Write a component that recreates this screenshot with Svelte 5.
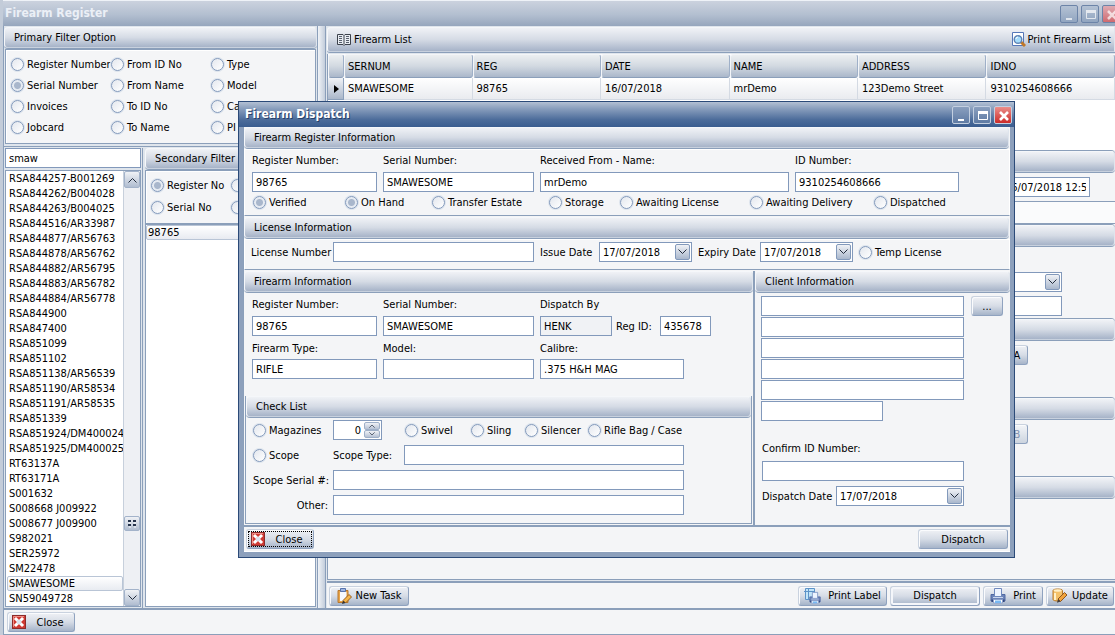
<script>
  const primary = ['Register Number', 'From ID No', 'Type', 'Serial Number', 'From Name', 'Model', 'Invoices', 'To ID No', 'Calibre', 'Jobcard', 'To Name', 'PI'];
  const serials = [
    'RSA844257-B001269', 'RSA844262/B004028', 'RSA844263/B004025', 'RSA844516/AR33987', 'RSA844877/AR56763',
    'RSA844878/AR56762', 'RSA844882/AR56795', 'RSA844883/AR56782', 'RSA844884/AR56778', 'RSA844900', 'RSA847400',
    'RSA851099', 'RSA851102', 'RSA851138/AR56539', 'RSA851190/AR58534', 'RSA851191/AR58535', 'RSA851339',
    'RSA851924/DM400024', 'RSA851925/DM400025', 'RT63137A', 'RT63171A', 'S001632', 'S008668 J009922',
    'S008677 J009900', 'S982021', 'SER25972', 'SM22478', 'SMAWESOME', 'SN59049728'
  ];
  const columns = ['SERNUM', 'REG', 'DATE', 'NAME', 'ADDRESS', 'IDNO'];
  const record = ['SMAWESOME', '98765', '16/07/2018', 'mrDemo', '123Demo Street', '9310254608666'];
  const statuses = ['Verified', 'On Hand', 'Transfer Estate', 'Storage', 'Awaiting License', 'Awaiting Delivery', 'Dispatched'];
</script>

{#snippet radio(label, group, checked = false)}
  <label class="radio"><input type="radio" name={group} {checked} /><span>{label}</span></label>
{/snippet}

{#snippet chevron()}
  <svg width="9" height="6" viewBox="0 0 9 6" fill="none" stroke="#222c3c" aria-hidden="true"><path d="M.5 .5l4 4 4-4" /></svg>
{/snippet}

{#snippet drop(value, id, label)}
  <span class="drop">
    <select {id} aria-label={label}><option>{value}</option></select>
    <i>{@render chevron()}</i>
  </span>
{/snippet}

{#snippet field(label, id, value)}
  <div class="field"><label for={id}>{label}</label><input type="text" {id} {value} /></div>
{/snippet}

{#snippet closeIcon()}
  <svg width="14" height="14" viewBox="0 0 14 14" aria-hidden="true">
    <rect x=".5" y=".5" width="13" height="13" fill="#cf3a34" stroke="#8c2b2b" />
    <path d="M1.500 12V1.500H12" fill="none" stroke="#f08d85" />
    <path d="M4 4l6 6M10 4l-6 6" stroke="#fff" stroke-width="3" stroke-linecap="square" />
    <rect x="5" y="5" width="4" height="4" fill="#dbe4f0" />
  </svg>
{/snippet}

{#snippet winButtons()}
  <div class="winbtns">
    <button type="button" aria-label="Minimise"><svg width="18" height="18" viewBox="0 0 18 18"><path d="M5 13h6" stroke="#fff" stroke-width="2" /></svg></button>
    <button type="button" aria-label="Maximise"><svg width="18" height="18" viewBox="0 0 18 18"><path d="M4.500 4.500h9v8h-9z" fill="none" stroke="#fff" /><path d="M4 5.500h10" stroke="#fff" stroke-width="3" /></svg></button>
    <button type="button" class="x" aria-label="Close"><svg width="18" height="18" viewBox="0 0 18 18"><path d="M5 5l8 8M13 5l-8 8" stroke="#fff" stroke-width="2.600" /></svg></button>
  </div>
{/snippet}

{#snippet printerShape()}
  <path d="M1 6.500h14v6.500H1z" fill="#6d84b8" stroke="#5069a3" />
  <path d="M1.500 11.500h13V14h-13z" fill="#33477e" />
  <path d="M4.500 .5h7v8h-7z" fill="#eef4ff" stroke="#7089bd" />
  <path d="M3 9.500h10" stroke="#c9d6ee" />
  <path d="M3.500 11.500h9v3.500h-9z" fill="#fff" stroke="#8ba0cb" />
  <path d="M5 12.500h6V15H5z" fill="#79b8f2" />
{/snippet}

<div class="window">
  <header class="title main-title">
    <h1>Firearm Register</h1>
    {@render winButtons()}
  </header>

  <div class="work">
    <aside class="left">
      <h2 class="bar">Primary Filter Option</h2>
      <div class="box primary">
        {#each primary as p}{@render radio(p, 'primary', p === 'Serial Number')}{/each}
      </div>
      <div class="lists">
        <div class="serial-col">
          <input type="text" class="search" value="smaw" aria-label="Search" />
          <div class="listbox">
            <ul role="listbox" aria-label="Serial numbers">
              {#each serials as s}<li role="option" aria-selected={s === 'SMAWESOME'} class:sel={s === 'SMAWESOME'}>{s}</li>{/each}
            </ul>
            <div class="scroll">
              <button type="button" class="cap up" aria-label="Scroll up">{@render chevron()}</button>
              <span class="thumb"><svg width="8" height="8" viewBox="0 0 8 8" aria-hidden="true"><path d="M0 1h3M5 1h3M0 5h3M5 5h3" stroke="#26344c" stroke-width="2" /><path d="M1 3h2M6 3h2M1 7h2M6 7h2" stroke="#f8fafc" /></svg></span>
              <button type="button" class="cap" aria-label="Scroll down">{@render chevron()}</button>
            </div>
          </div>
        </div>
        <div class="second-col">
          <h2 class="bar">Secondary Filter Option</h2>
          <div class="box secondary">
            {@render radio('Register No', 'secondary', true)}
            {@render radio('Name', 'secondary')}
            {@render radio('Serial No', 'secondary')}
            {@render radio('ID No', 'secondary')}
          </div>
          <ul class="results"><li>98765</li></ul>
        </div>
      </div>
    </aside>
    <div class="splitter"></div>

    <section class="right">
      <div class="bar list-bar">
        <svg width="14" height="12" viewBox="0 0 14 12" fill="none" aria-hidden="true">
          <path d="M.5 .5H6L7 1.500 8 .5h5.500v10H8l-1 1-1-1H.5z" fill="#e8ecf2" stroke="#3c424c" />
          <path d="M7 1.500v9" stroke="#3c424c" />
          <path d="M2 2.500h3M2 4.500h3M2 6.500h3M2 8.500h3M9 2.500h3M9 4.500h3M9 6.500h3M9 8.500h3" stroke="#59616e" />
        </svg>
        <h2>Firearm List</h2>
        <button type="button" class="flat">
          <svg width="14" height="15" viewBox="0 0 14 15" aria-hidden="true">
            <path d="M.5 .5h11v13H.5z" fill="#fff" stroke="#5577b8" />
            <path d="M9 10l4 4" stroke="#c07828" stroke-width="3" />
            <circle cx="6" cy="7.500" r="3.800" fill="#a6dcfa" stroke="#5d82b4" stroke-width="1.400" />
            <path d="M4 7a2 2 0 0 1 2-2" fill="none" stroke="#fff" />
          </svg>
          Print Firearm List
        </button>
      </div>
      <div class="grid-wrap">
        <table>
          <thead><tr><th class="ind" aria-label="Row"></th>{#each columns as c}<th>{c}</th>{/each}</tr></thead>
          <tbody><tr>
            <td class="ind"><svg width="5" height="8" viewBox="0 0 5 8" aria-hidden="true"><path d="M0 0l5 4-5 4z" /></svg></td>
            {#each record as r}<td>{r}</td>{/each}
          </tr></tbody>
        </table>
      </div>

      <div class="details">
        <div class="bar blank"></div>
        <div class="pane p1"><input type="text" class="stamp" value="16/07/2018 12:5" aria-label="Date captured" /></div>
        <div class="strip"></div>
        <div class="bar blank"></div>
        <div class="pane p2">
          {@render drop('', 'maker', 'Make')}
          <input type="text" aria-label="Model" />
        </div>
        <div class="bar blank"></div>
        <div class="pane p3"><button type="button" class="btn">A</button></div>
        <div class="bar blank"></div>
        <div class="pane p3"><button type="button" class="btn" disabled>B</button></div>
        <div class="bar blank"></div>
        <div class="pane rest"></div>
      </div>

      <div class="actions">
        <button type="button" class="btn new">
          <svg width="15" height="16" viewBox="0 0 15 16" aria-hidden="true">
            <path d="M1 2.500h10v12H1z" fill="#e9a548" stroke="#b8772c" />
            <path d="M3 4h6.500v9H3z" fill="#f6f9ff" />
            <path d="M3.500 .5h5v3h-5z" fill="#9fb6e2" stroke="#5874ad" />
            <path d="M6 12.500l6-6 2.500 2.500-6 6z" fill="#f5b64c" stroke="#99601f" />
            <path d="M5 16l1-3.500 2.500 2.500z" fill="#333" />
          </svg>
          New Task
        </button>
        <button type="button" class="btn label">
          <svg width="17" height="16" viewBox="0 0 17 16" aria-hidden="true">
            <path d="M1.500 .5h9v11h-9zM0 3.500h11M4.500 0v12" fill="#c2e4f8" stroke="#5d93c8" />
            <g transform="translate(5 4) scale(.75)">{@render printerShape()}</g>
          </svg>
          Print Label
        </button>
        <button type="button" class="btn default">Dispatch</button>
        <button type="button" class="btn print">
          <svg width="16" height="16" viewBox="0 0 16 16" aria-hidden="true">{@render printerShape()}</svg>
          Print
        </button>
        <button type="button" class="btn update">
          <svg width="16" height="15" viewBox="0 0 16 15" aria-hidden="true">
            <path d="M1 2.500C1 .5 10.500 .5 10.500 2.500v9c0 2-9.500 2-9.500 0z" fill="#f4c169" stroke="#b87a2c" />
            <ellipse cx="5.700" cy="2.500" rx="4" ry="1.200" fill="#fff0c8" />
            <path d="M3 5v7" stroke="#fff0c8" stroke-width="2" />
            <path d="M6 11l6.500-6.500 2.500 2.500L8.500 13.500z" fill="#f0a33c" stroke="#8c5620" />
            <path d="M5 14.800l1-3.800 2.500 2.500z" fill="#443c38" />
          </svg>
          Update
        </button>
      </div>
    </section>
  </div>

  <footer class="foot"><button type="button" class="btn close">{@render closeIcon()}<span>Close</span></button></footer>
</div>

<div class="dialog" role="dialog" aria-labelledby="dlg-title">
  <header class="title dlg-title">
    <h1 id="dlg-title">Firearm Dispatch</h1>
    {@render winButtons()}
  </header>
  <div class="content">
    <h2 class="bar">Firearm Register Information</h2>
    <div class="sect reg">
      <div class="fields">
        {@render field('Register Number:', 'r1', '98765')}
        {@render field('Serial Number:', 'r2', 'SMAWESOME')}
        {@render field('Received From - Name:', 'r3', 'mrDemo')}
        {@render field('ID Number:', 'r4', '9310254608666')}
      </div>
      <div class="statuses">
        {#each statuses as s, i}{@render radio(s, 'status' + i, i < 2)}{/each}
      </div>
    </div>

    <h2 class="bar">License Information</h2>
    <div class="sect lic">
      <label for="lic">License Number</label><input type="text" id="lic" />
      <label for="issue">Issue Date</label>{@render drop('17/07/2018', 'issue')}
      <label for="expiry">Expiry Date</label>{@render drop('17/07/2018', 'expiry')}
      {@render radio('Temp License', 'temp')}
    </div>

    <div class="cols">
      <section class="fire">
        <h2 class="bar">Firearm Information</h2>
        <div class="fields three">
          {@render field('Register Number:', 'f1', '98765')}
          {@render field('Serial Number:', 'f2', 'SMAWESOME')}
          <div class="field">
            <label for="henk">Dispatch By</label>
            <div class="by">
              <input type="text" id="henk" value="HENK" readonly />
              <label for="regid">Reg ID:</label>
              <input type="text" id="regid" value="435678" />
            </div>
          </div>
          {@render field('Firearm Type:', 'f3', 'RIFLE')}
          {@render field('Model:', 'f4', '')}
          {@render field('Calibre:', 'f5', '.375 H&H MAG')}
        </div>
        <div class="check">
          <h2 class="bar">Check List</h2>
          <div class="rows">
            <div class="row">
              {@render radio('Magazines', 'mag')}
              <span class="spin">
                <input type="number" value="0" aria-label="Magazines" />
                <span><button type="button" class="flip" aria-label="More">{@render chevron()}</button><button type="button" aria-label="Fewer">{@render chevron()}</button></span>
              </span>
              <div class="extras">
                {@render radio('Swivel', 'swivel')}
                {@render radio('Sling', 'sling')}
                {@render radio('Silencer', 'silencer')}
                {@render radio('Rifle Bag / Case', 'bag')}
              </div>
            </div>
            <div class="row scope">
              {@render radio('Scope', 'scope')}
              <label for="stype">Scope Type:</label><input type="text" id="stype" />
            </div>
            <div class="row long"><label for="sser">Scope Serial #:</label><input type="text" id="sser" /></div>
            <div class="row long"><label for="other">Other:</label><input type="text" id="other" /></div>
          </div>
        </div>
      </section>
      <section class="client">
        <h2 class="bar">Client Information</h2>
        <div class="client-body">
          <div class="lines">
            {#each [1, 2, 3, 4, 5, 6] as n}<input type="text" class:short={n === 6} aria-label={'Client line ' + n} />{/each}
          </div>
          <button type="button" class="btn dots">...</button>
        </div>
        <div class="confirm">
          <label for="cid">Confirm ID Number:</label>
          <input type="text" id="cid" />
          <div class="ddate"><label for="dd">Dispatch Date</label>{@render drop('17/07/2018', 'dd')}</div>
        </div>
      </section>
    </div>

    <footer class="dfoot">
      <button type="button" class="btn close focus">{@render closeIcon()}<span>Close</span></button>
      <button type="button" class="btn wide">Dispatch</button>
    </footer>
  </div>
</div>

<style>
  :global(body) {
    margin: 0;
    background: #cbd3de;
    overflow: hidden;
  }
  :global(#app) {
    position: relative;
    font: 11px/15px "DejaVu Sans Condensed", "DejaVu Sans", sans-serif;
    color: #000;
  }
  * { box-sizing: border-box; }
  h1, h2, ul { margin: 0; padding: 0; font: inherit; list-style: none; }
  input, select, button { font: inherit; color: inherit; margin: 0; border-radius: 0; }
  svg { display: block; flex: none; }
  button { padding: 0; }

  .title { display: flex; align-items: center; justify-content: space-between; }
  .title h1 { font-weight: bold; font-size: 12px; white-space: nowrap; }

  .window {
    min-height: 100vh;
    display: flex;
    flex-direction: column;
    border-left: 3px solid #c3ccd9;
    background: #f4f5f7;
    overflow: hidden;
  }
  .main-title {
    height: 26px;
    flex: none;
    margin-left: -3px;
    padding-left: 5px;
    border-top: 1px solid #eef2f7;
    background: linear-gradient(#cbd2de, #b3bfd0 55%, #96a6bd);
    color: #ebeff6;
  }
  .winbtns { display: flex; gap: 3px; }
  .winbtns button {
    width: 18px;
    height: 18px;
    border: 1px solid #c3cfe0;
    border-radius: 2px;
    background: linear-gradient(#8a9fbe, #5f7ba4);
    display: grid;
    place-items: center;
  }
  .winbtns button.x { background: linear-gradient(#eb8e8a, #cc2b28); }
  .main-title .winbtns { margin-right: -5px; }
  .main-title .winbtns button { border-color: #6c84a8; background: linear-gradient(#b4c2d4, #91a5c0); }
  .main-title .winbtns button.x { background: linear-gradient(#dfaab2, #cf6a70); }
  .main-title .winbtns svg { opacity: 0.7; }

  .work { flex: 1; display: flex; min-height: 0; border-left: 1px solid #8b9fba; background: #dfe5ec; }

  .bar {
    height: 21px;
    flex: none;
    padding-left: 9px;
    line-height: 20px;
    border: 1px solid #f5f7fa;
    border-right-color: #dfe5ed;
    border-bottom-color: #c8d1de;
    border-radius: 4px;
    background: linear-gradient(#f0f2f6, #d5dbe5 50%, #a6b3c8);
    box-shadow: 0 1px #8b9fba;
    white-space: nowrap;
    overflow: hidden;
  }
  .box { border: 1px solid #8b9fba; box-shadow: inset 1px 1px #fff; background: #f4f5f7; }

  .radio { display: flex; align-items: center; gap: 3px; white-space: nowrap; }
  .radio input {
    appearance: none;
    width: 13px;
    height: 13px;
    flex: none;
    border: 1px solid #8299bb;
    border-radius: 50%;
    background: linear-gradient(135deg, #e3e7ee, #fff);
    box-shadow: 0 0 0 1px #dde4ed;
  }
  .radio input:checked {
    background: radial-gradient(circle, #a9b7cc 0 3px, #e6ebf2 4px);
  }

  input[type="text"], select, .search {
    height: 20px;
    min-width: 0;
    padding: 0 3px;
    border: 1px solid #8299bb;
    background: #fff;
    outline: 0;
  }
  input[readonly] { background: #f0f2f5; }

  .drop { display: inline-flex; position: relative; }
  .drop select { appearance: none; width: 100%; }
  .drop i {
    position: absolute;
    right: 2px;
    top: 2px;
    bottom: 2px;
    width: 15px;
    border: 1px solid #8299bb;
    border-radius: 2px;
    background: linear-gradient(#f0f2f6, #a9b7cc);
    display: grid;
    place-items: center;
    pointer-events: none;
  }

  .btn {
    height: 20px;
    border: 1px solid #8fa2bf;
    border-top-color: #c9d2df;
    border-left-color: #c9d2df;
    border-radius: 3px;
    background: linear-gradient(#eff1f5, #d6dce6 50%, #a6b4c9);
    box-shadow: inset 1px 1px #fafbfd;
    display: flex;
    align-items: center;
    justify-content: center;
    white-space: nowrap;
  }
  .btn:disabled { color: #7f91af; background: linear-gradient(#f3f5f8, #ccd4df); }
  .btn.close { width: 68px; justify-content: flex-start; padding-left: 4px; }
  .btn.close span { flex: 1; text-align: center; }
  .btn.focus { position: relative; }
  .btn.focus::after { content: ""; position: absolute; inset: 1px; border: 1px dotted #000; }

  .left { width: 314px; flex: none; display: flex; flex-direction: column; border-right: 1px solid #8b9fba; padding-top: 1px; }
  .primary {
    display: grid;
    grid-template-columns: 100px 100px 1fr;
    grid-auto-rows: 21px;
    margin: 1px 1px 2px 1px;
    height: 95px;
    padding: 4px 5px;
    overflow: hidden;
  }
  .lists { flex: 1; display: flex; border-top: 1px solid #8b9fba; padding-top: 1px; }
  .serial-col { width: 139px; flex: none; display: flex; flex-direction: column; border-right: 1px solid #8b9fba; }
  .search { width: 136px; margin: 0 0 2px 1px; }
  .listbox { flex: 1; width: 136px; margin: 0 0 1px 1px; display: flex; border: 1px solid #8b9fba; background: #fff; }
  .listbox ul { flex: 1; min-width: 0; padding-left: 1px; }
  .listbox li { height: 15px; line-height: 15px; padding-left: 2px; overflow: hidden; white-space: nowrap; }
  .listbox li.sel, .results li { border: 1px solid #b9c5d6; border-radius: 2px; background: linear-gradient(#fff, #e8ebf1); }
  .listbox li.sel { line-height: 13px; padding-left: 1px; }
  .scroll { width: 17px; display: flex; flex-direction: column; background: #eef0f4; border-left: 1px solid #c7d0dc; }
  .cap, .thumb { height: 17px; border: 1px solid #a3b3ca; border-radius: 2px; background: linear-gradient(#f0f2f6, #b0bdd0); display: grid; place-items: center; }
  .cap.up :global(svg), .flip :global(svg) { transform: scaleY(-1); }
  .thumb { height: 15px; margin: auto 0 58px; }

  .second-col { flex: 1; min-width: 0; display: flex; flex-direction: column; padding: 0 1px 0 2px; }
  .secondary { display: grid; grid-template-columns: 80px 1fr; grid-auto-rows: 22px; margin-top: 1px; height: 54px; padding: 3px 5px; overflow: hidden; }
  .results { flex: 1; border: 1px solid #8b9fba; background: #fff; margin-bottom: 1px; }
  .results li { height: 15px; line-height: 13px; padding-left: 1px; }
  .splitter { width: 8px; flex: none; background: linear-gradient(90deg, #f0f3f7, #c3cddb); border-right: 1px solid #8b9fba; }

  .right { flex: 1; min-width: 0; display: flex; flex-direction: column; padding: 1px 0 0 1px; }
  .list-bar { height: 25px; display: flex; align-items: center; gap: 3px; border-radius: 3px 0 0 3px; padding-right: 3px; }
  .flat { margin-left: auto; border: 0; background: none; display: flex; align-items: center; gap: 2px; }
  .grid-wrap { height: 96px; margin-top: 2px; border-left: 1px solid #8b9fba; background: #fff; overflow: hidden; }
  table { width: 100%; min-width: 786px; border-collapse: separate; border-spacing: 0; table-layout: fixed; }
  th, td { width: 128px; padding: 0 0 0 4px; text-align: left; font-weight: normal; white-space: nowrap; }
  th {
    height: 24px;
    border: 1px solid #f3f5f8;
    border-bottom-color: #8b9fba;
    border-right-color: #9fb0c8;
    border-radius: 3px;
    background: linear-gradient(#eceff1, #d2d9e1 50%, #aab7ca);
    padding-left: 3px;
  }
  td { height: 22px; border-right: 1px solid #d4dae3; border-bottom: 1px solid #d4dae3; background: linear-gradient(#fff, #e9ebef); }
  .ind { width: 16px; }
  td.ind { border-color: #8b9fba; padding-left: 6px; background: linear-gradient(#f0f2f6, #aab7ca); }

  .details { flex: 1; display: flex; flex-direction: column; background: #f4f5f7; border-left: 1px solid #8b9fba; border-bottom: 1px solid #8b9fba; }
  .blank { border-radius: 0 4px 4px 0; margin-top: 1px; box-shadow: 0 1px #8b9fba, 0 -1px #8b9fba; }
  .pane { display: flex; flex-direction: column; align-items: flex-end; }
  .p1 { height: 30px; padding: 5px 25px 0 0; border-bottom: 1px solid #8b9fba; }
  .stamp { width: 89px; }
  .strip { height: 22px; background: #fafbfc; border-bottom: 1px solid #8b9fba; }
  .p2 { height: 72px; padding: 26px 53px 0 0; gap: 4px; }
  .p2 .drop, .p2 > input { width: 200px; }
  .p3 { height: 57px; padding: 5px 87px 0 0; }
  .p3 .btn { width: 30px; padding-left: 8px; }

  .actions { height: 27px; flex: none; display: flex; align-items: center; gap: 3px; margin-top: 1px; padding: 0 1px 0 2px; border-top: 2px solid #8b9fba; background: #f4f5f7; }
  .new { width: 80px; gap: 4px; margin-right: auto; }
  .label { width: 89px; gap: 7px; }
  .default { width: 90px; box-shadow: inset 0 0 0 2px #f4f6fa; }
  .print { width: 60px; gap: 7px; }
  .update { width: 68px; gap: 4px; }

  .foot { height: 27px; flex: none; display: flex; align-items: center; padding-left: 3px; border-left: 1px solid #8b9fba; border-top: 2px solid #8b9fba; border-bottom: 1px solid #8b9fba; }

  .dialog {
    position: absolute;
    left: 238px;
    top: 101px;
    width: 777px;
    border: 1px solid #2b4a78;
    background: #8da0bc;
    padding: 0 4px 5px;
  }
  .dlg-title {
    height: 25px;
    margin: 0 -4px;
    padding: 0 2px 0 6px;
    background: linear-gradient(#b3c0d3, #8ba0be 25%, #4d6d9b 70%, #3a5d90);
    color: #fff;
    text-shadow: 1px 1px #26416b;
  }
  .content { background: #f4f5f7; border-left: 1px solid #8b9fba; }
  .content > .bar { margin-right: 1px; }
  .sect { border: 1px solid #fff; border-bottom-color: #8b9fba; margin-top: 1px; }
  .reg { height: 67px; padding: 3px 8px 0 7px; margin-bottom: 1px; }
  .fields { display: grid; grid-template-columns: 125px 151px 249px 164px; column-gap: 6px; }
  .field { display: flex; flex-direction: column; }
  .field label { height: 19px; line-height: 16px; }
  .statuses { display: grid; grid-template-columns: 92px 87px 117px 71px 130px 124px auto; height: 20px; align-items: center; padding-left: 1px; }

  .lic { height: 31px; display: grid; grid-template-columns: 82px 201px 65px 93px 68px 93px auto; align-items: center; padding: 0 0 5px 6px; margin-bottom: 1px; }
  .lic label { white-space: nowrap; }
  .lic > label:not(:first-child) { padding-left: 6px; }
  .lic > :global(.radio) { padding-left: 6px; }

  .cols { display: flex; border-bottom: 2px solid #8b9fba; }
  .fire { flex: 1; min-width: 0; display: flex; flex-direction: column; border-right: 2px solid #8b9fba; }
  .three { grid-template-columns: 125px 151px 171px; padding: 5px 0 0 8px; row-gap: 5px; }
  .three .field:nth-child(n + 4) label { height: 18px; }
  .three .field:last-child input { width: 144px; }
  .by { display: grid; grid-template-columns: 72px 1fr 51px; align-items: center; }
  .by label { line-height: 20px; padding-left: 4px; }
  .check { margin: 17px 1px 1px 1px; border: 1px solid #8b9fba; border-top: 0; }
  .rows { height: 106px; padding: 3px 0 0; display: flex; flex-direction: column; gap: 5px; }
  .row { display: grid; height: 20px; align-items: center; grid-template-columns: 80px 49px 1fr; padding-left: 7px; }
  .scope { grid-template-columns: 80px 71px 280px; }
  .long { grid-template-columns: 80px 351px; }
  .long label { text-align: right; padding-right: 5px; white-space: nowrap; }
  .scope > label:not(.radio) { white-space: nowrap; }
  .extras { display: grid; grid-template-columns: 66px 54px 63px auto; padding-left: 23px; }
  .spin { display: flex; height: 20px; border: 1px solid #8299bb; background: #fff; padding: 1px; }
  .spin input { appearance: textfield; width: 29px; border: 0; padding: 0 3px 0 0; text-align: right; outline: 0; }
  .spin input::-webkit-inner-spin-button { appearance: none; }
  .spin > span { display: flex; flex-direction: column; width: 16px; }
  .spin button { flex: 1; height: 8px; border: 1px solid #9fb0c8; border-radius: 2px; background: linear-gradient(#f0f2f6, #b5c1d3); display: grid; place-items: center; }
  .spin button :global(svg) { width: 6px; height: 4px; }

  .client { width: 255px; flex: none; }
  .client-body { display: flex; gap: 7px; padding: 4px 0 0 6px; }
  .lines { display: flex; flex-direction: column; gap: 1px; width: 203px; }
  .lines .short { width: 122px; }
  .dots { width: 32px; }
  .confirm { padding: 20px 46px 0 7px; display: flex; flex-direction: column; }
  .confirm > label { height: 20px; }
  .ddate { display: grid; grid-template-columns: 74px 1fr; align-items: center; margin-top: 5px; }
  .ddate label { white-space: nowrap; }

  .dfoot { height: 25px; display: flex; align-items: center; justify-content: space-between; padding: 0 2px; border-bottom: 1px solid #fff; }
  .wide { width: 90px; }
</style>
